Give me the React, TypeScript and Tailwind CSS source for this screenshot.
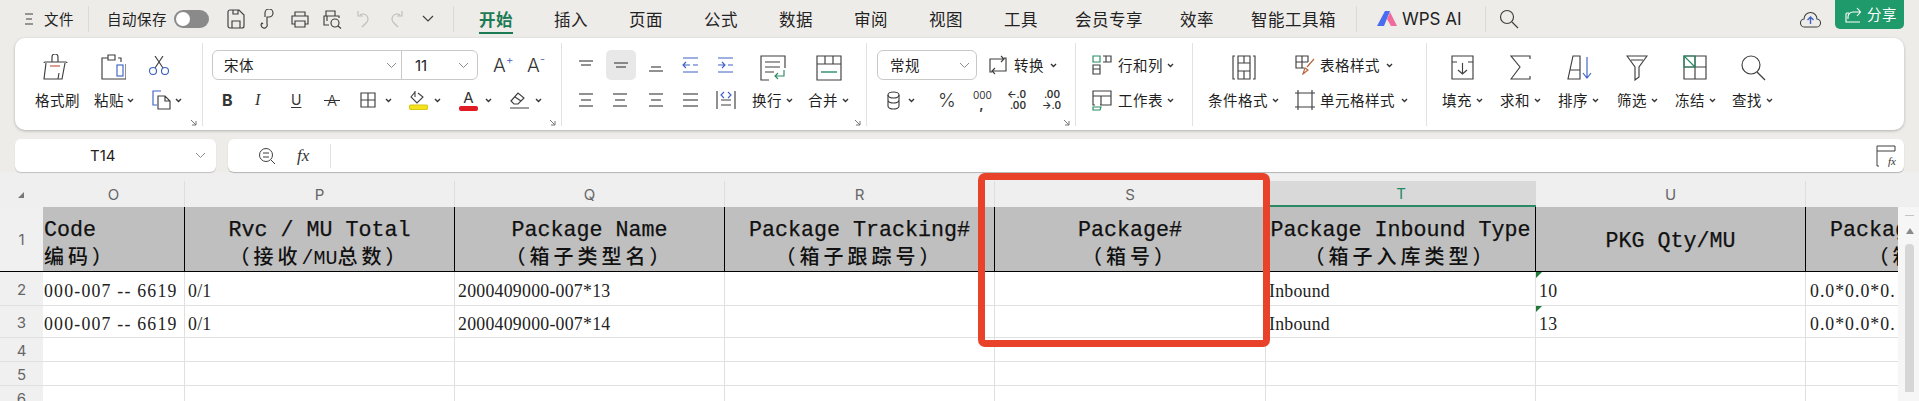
import React from "react";

const INK = "#3f3f3f";
const BLUE = "#3f62c4";
const GREEN = "#2b8a66";

function I({ w, h, className = "", children, sw = 1.15 }: { w: number; h: number; className?: string; children?: React.ReactNode; sw?: number }) {
  return (
    <svg width={w} height={h} viewBox={`0 0 ${w} ${h}`} fill="none" stroke={INK} strokeWidth={sw} className={`block shrink-0 ${className}`}>
      {children}
    </svg>
  );
}

const Chev = ({ className = "" }: { className?: string }) => (
  <svg width="7" height="5" viewBox="0 0 7 5" fill="none" stroke="#333" strokeWidth="1.4" className={`block shrink-0 ${className}`}>
    <path d="M1 1 L3.5 3.5 L6 1" />
  </svg>
);

const ThinChev = ({ className = "" }: { className?: string }) => (
  <svg width="11" height="7" viewBox="0 0 11 7" fill="none" stroke="#8d8d8d" strokeWidth="1" className={`block shrink-0 ${className}`}>
    <path d="M1 1 L5.5 5.5 L10 1" />
  </svg>
);

const Corner = () => (
  <svg width="7" height="7" viewBox="0 0 7 7" fill="none" stroke="#777" strokeWidth="1" className="absolute right-[5px] bottom-0 block">
    <path d="M1 1 L6 6 M6 2 V6 H2" />
  </svg>
);

const Label = ({ children, className = "" }: { children: React.ReactNode; className?: string }) => (
  <span className={`text-[14.5px] tracking-[0.5px] leading-none whitespace-nowrap text-[#1f1f1f] ${className}`}>{children}</span>
);

const Tab = ({ children }: { children: React.ReactNode }) => (
  <span className="text-[16.5px] tracking-[0.5px] leading-none whitespace-nowrap text-[#222]">{children}</span>
);

const Lines = ({ w = 16, ws, blue = false }: { w?: number; ws: number[][]; blue?: boolean }) => (
  <I w={w} h={16}>
    {ws.map((l, i) => (
      <path key={i} d={`M${l[1]} ${l[0]} H${l[2]}`} stroke={blue ? BLUE : INK} />
    ))}
  </I>
);

function TitleBar() {
  return (
    <div className="h-[38px] flex items-center pl-[24px] pr-[15px]">
      <I w={10} h={14}><path d="M1 2 H9 M2 7 H8 M1 12 H9" /></I>
      <span className="ml-[10px] text-[14.5px] tracking-[0.5px] leading-none text-[#222] whitespace-nowrap">文件</span>
      <div className="ml-[14px] w-px h-[26px] bg-[#dcdad6]" />
      <span className="ml-[18px] text-[14.5px] tracking-[0.5px] leading-none text-[#222] whitespace-nowrap">自动保存</span>
      <div className="ml-[7px] w-[35px] h-[18px] rounded-full bg-[#8a8a8a] flex items-center pl-[2px]">
        <div className="w-[14px] h-[14px] rounded-full bg-white" />
      </div>
      <I w={18} h={20} className="ml-[18px]"><path d="M1 3 a2 2 0 0 1 2-2 H12 L17 6 V17 a2 2 0 0 1 -2 2 H3 a2 2 0 0 1 -2-2 Z M5 19 V12 H13 V19 M6 1 V5 H11 V1" /></I>
      <I w={16} h={20} className="ml-[15px]"><path d="M5 8 V4 a4 4 0 0 1 8 0 a4 4 0 0 1 -4 4 H7 V15 a3 3 0 1 1 -5 -1 l1 1" /></I>
      <I w={18} h={18} className="ml-[15px]"><path d="M4 6 V2 H14 V6 M4 14 H1 V6 H17 V14 H14 M4 11 H14 V17 H4 Z" /></I>
      <I w={19} h={20} className="ml-[14px]"><path d="M3 7 V2 H12 V7 M6 16 H1 V7 H16 V9 M4 12 V7" /><circle cx="12" cy="14" r="4" /><path d="M15 17 L18 19.5" /></I>
      <I w={13} h={18} className="ml-[15px]"><path d="M3 5 a5 5 0 1 1 6 8 L5 17 M1 1 V6 H6" stroke="#bdbdbd" /></I>
      <I w={13} h={18} className="ml-[20px]"><path d="M10 5 a5 5 0 1 0 -6 8 L8 17 M12 1 V6 H7" stroke="#bdbdbd" /></I>
      <I w={12} h={8} className="ml-[19px]"><path d="M1 1 L6 6 L11 1" /></I>
      <div className="ml-[19px] w-px h-[26px] bg-[#dcdad6]" />
      <span className="relative ml-[25px] text-[16.5px] tracking-[0.5px] font-bold leading-none text-[#1c7a54] whitespace-nowrap">
        开始
        <span className="absolute left-0 right-0 top-[21px] h-[2px] bg-[#1c7a54]" />
      </span>
      <div className="ml-[41px] flex items-center gap-[41px]">
        <Tab>插入</Tab><Tab>页面</Tab><Tab>公式</Tab><Tab>数据</Tab><Tab>审阅</Tab><Tab>视图</Tab><Tab>工具</Tab>
      </div>
      <div className="ml-[37px] flex items-center gap-[37px]">
        <Tab>会员专享</Tab><Tab>效率</Tab><Tab>智能工具箱</Tab>
      </div>
      <div className="ml-[20px] w-px h-[26px] bg-[#dcdad6]" />
      <svg width="20" height="16" viewBox="0 0 20 16" className="ml-[20px] block shrink-0">
        <path d="M0 15 L8 0 H13 L7 15 Z" fill="#4a6cf0" />
        <path d="M10 8 L13 1 L20 15 H14 Z" fill="#f06a9c" />
      </svg>
      <span className="ml-[5px] w-[58px] text-[17px] leading-none text-[#222] whitespace-nowrap [font-family:Inter,sans-serif]">WPS AI</span>
      <div className="ml-[25px] w-px h-[26px] bg-[#dcdad6]" />
      <I w={20} h={20} className="ml-[13px]"><circle cx="8" cy="8" r="6.5" /><path d="M13 13 L19 19" /></I>
      <svg width="21" height="19" viewBox="0 0 21 19" fill="none" className="ml-auto block shrink-0">
        <path d="M5 17 a4 4 0 0 1 -1 -8 a6.5 6.5 0 0 1 13 0 a4 4 0 0 1 -1 8 Z" stroke={INK} strokeWidth="1.1" />
        <path d="M10.5 14 V7 M7.5 10 L10.5 7 L13.5 10" stroke={BLUE} strokeWidth="1.4" />
      </svg>
      <div className="ml-[14px] w-[69px] h-[29px] self-start rounded-b-[5px] bg-[#1f9a6b] flex items-center pl-[9px] gap-[5px]">
        <svg width="18" height="18" viewBox="0 0 18 18" fill="none" stroke="#fff" strokeWidth="1.1" className="block shrink-0">
          <path d="M5 7 H3 a1 1 0 0 0 -1 1 V16 H16 M4 13 V11 a5 5 0 0 1 5 -5 H16 M13 2 L16.5 6 L13 10" />
        </svg>
        <span className="text-[14.5px] tracking-[0.5px] leading-none text-white whitespace-nowrap">分享</span>
      </div>
    </div>
  );
}

const Row1 = ({ children }: { children: React.ReactNode }) => <div className="h-[30px] flex items-center">{children}</div>;
const Row2 = ({ children }: { children: React.ReactNode }) => <div className="h-[30px] mt-[5px] flex items-center">{children}</div>;

function Ribbon() {
  return (
    <div className="mx-[15px] w-[1889px] h-[92px] bg-white rounded-[10px] shadow-[0_1px_3px_rgba(0,0,0,0.25)] flex pt-[5px]">
      {/* clipboard */}
      <div className="relative w-[188px] h-[83px] border-r border-[#e2e2e2] pt-[7px]">
        <Row1>
          <I w={25} h={26} className="ml-[28px] mt-[3px]">
            <path d="M9 8 V3 a3 3 0 0 1 6 0 V8 M1 9 a1 1 0 0 1 1 -1 H23 a1 1 0 0 1 1 1 M3 9 L1 25 H19 L22 9 M16 19 L15 25" />
            <path d="M7 12 H17" stroke="#c4543e" />
          </I>
          <I w={25} h={26} className="ml-[33px] mt-[3px]">
            <path d="M7 4 H1 V25 H14 M7 6 V1 H14 V6 Z M17 4 H20 V8 M14 25 H25 V10" />
            <rect x="16" y="11" width="6" height="11" stroke={BLUE} />
          </I>
          <I w={20} h={19} className="ml-[23px]">
            <path d="M6 12 L14 0 M14 12 L6 0" />
            <circle cx="4" cy="15" r="3.5" stroke={BLUE} />
            <circle cx="16" cy="15" r="3.5" stroke={BLUE} />
          </I>
        </Row1>
        <Row2>
          <Label className="ml-[20px]">格式刷</Label>
          <Label className="ml-[14px]">粘贴</Label>
          <Chev className="ml-[3px]" />
          <I w={19} h={20} className="ml-[18px]">
            <path d="M9 1 H1 V15 H5 M1 1 H9" stroke={BLUE} />
            <path d="M6 6 H13 L18 11 V19 H6 Z M13 6 V11 H18" />
          </I>
          <Chev className="ml-[4px]" />
        </Row2>
        <Corner />
      </div>

      {/* font */}
      <div className="relative w-[359px] h-[83px] border-r border-[#e2e2e2] pt-[7px]">
        <Row1>
          <div className="ml-[9px] w-[266px] h-[30px] border border-[#c9c9c9] rounded-[6px] flex items-center">
            <div className="w-[189px] h-full border-r border-[#c9c9c9] flex items-center pl-[11px] pr-[4px]">
              <Label>宋体</Label>
              <ThinChev className="ml-auto" />
            </div>
            <span className="ml-[13px] text-[15px] leading-none text-[#222] [font-family:Inter,sans-serif]">11</span>
            <ThinChev className="ml-auto mr-[8px]" />
          </div>
          <span className="ml-[15px] w-[18px] flex items-start text-[19px] font-light leading-none text-[#333] [font-family:Inter,sans-serif]">A<span className="text-[12px] leading-none -mt-[2px] text-[#3f62c4]">+</span></span>
          <span className="ml-[16px] w-[18px] flex items-start text-[19px] font-light leading-none text-[#333] [font-family:Inter,sans-serif]">A<span className="text-[12px] leading-none -mt-[3px] text-[#3f62c4]">-</span></span>
        </Row1>
        <Row2>
          <span className="ml-[19px] w-[11px] text-[16px] font-bold leading-none text-[#333] [font-family:Inter,sans-serif]">B</span>
          <span className="ml-[22px] w-[12px] text-[16px] italic leading-none text-[#333] [font-family:'Liberation_Serif',serif]">I</span>
          <span className="ml-[24px] w-[12px] text-[14px] leading-none text-[#333] underline underline-offset-2 [font-family:Inter,sans-serif]">U</span>
          <span className="relative ml-[21px] w-[16px] text-center text-[15px] font-light leading-none text-[#333] [font-family:Inter,sans-serif]">
            A
            <span className="absolute left-0 right-0 top-[7px] h-px bg-[#333]" />
          </span>
          <I w={16} h={16} className="ml-[20px]"><path d="M1 1 H15 V15 H1 Z M8 1 V15 M1 8 H15" /></I>
          <Chev className="ml-[9px]" />
          <svg width="19" height="20" viewBox="0 0 19 20" fill="none" stroke={INK} strokeWidth="1.1" className="ml-[17px] block shrink-0">
            <path d="M6 2 L2 7 L8 13 L14 7 L9 3 M6 1 V7" />
            <rect x="0.5" y="15" width="18" height="4.5" rx="1.5" fill="#f3e21c" stroke="#d9c814" />
          </svg>
          <Chev className="ml-[6px]" />
          <div className="ml-[18px] w-[19px] flex flex-col items-center">
            <span className="text-[15px] leading-[15px] text-[#333] [font-family:Inter,sans-serif]">A</span>
            <div className="mt-[1px] w-[19px] h-[5px] rounded-[2px] bg-[#e01b24]" />
          </div>
          <Chev className="ml-[7px]" />
          <I w={21} h={18} className="ml-[17px]"><path d="M2 10 L9 2 L15 7 L9 13 H5 Z M6 6 L12 10 M1 17 H20" /></I>
          <Chev className="ml-[5px]" />
        </Row2>
        <Corner />
      </div>

      {/* alignment */}
      <div className="relative w-[305px] h-[83px] border-r border-[#e2e2e2] pt-[7px]">
        <Row1>
          <div className="ml-[16px] w-[16px]"><Lines ws={[[4, 1, 15], [8, 3, 13]]} /></div>
          <div className="ml-[12px] w-[30px] h-[30px] rounded-[5px] bg-[#e8e8e8] flex items-center justify-center"><Lines ws={[[6, 1, 15], [10, 3, 13]]} /></div>
          <div className="ml-[12px] w-[16px]"><Lines ws={[[10, 3, 13], [14, 1, 15]]} /></div>
          <I w={17} h={16} className="ml-[18px]"><path d="M1 1 H16 M1 15 H16 M11 8 H16 M1 8 H8 M4 5 L1 8 L4 11" stroke={BLUE} /></I>
          <I w={17} h={16} className="ml-[18px]"><path d="M1 1 H16 M1 15 H16 M1 8 H8 M11 8 H16 M5 5 L8 8 L5 11" stroke={BLUE} /></I>
          <I w={26} h={26} className="ml-[26px] mt-[5px]">
            <path d="M25 13 V1 H1 V25 H9 M5 7 H20 M5 12 H20 M5 17 H14" />
            <path d="M24 15 V21 H15 M18 18 L15 21 L18 24" stroke={GREEN} />
          </I>
          <I w={26} h={26} className="ml-[30px] mt-[5px]">
            <path d="M1 1 H25 V25 H1 Z M1 9 H25 M9 1 V9 M17 1 V9" />
            <path d="M5 17 H21" stroke={GREEN} strokeWidth="1.4" />
          </I>
        </Row1>
        <Row2>
          <div className="ml-[16px]"><Lines ws={[[2, 1, 15], [8, 3, 13], [14, 1, 15]]} /></div>
          <div className="ml-[18px]"><Lines ws={[[2, 1, 15], [8, 3, 13], [14, 1, 15]]} /></div>
          <div className="ml-[20px]"><Lines ws={[[2, 1, 15], [8, 3, 13], [14, 1, 15]]} /></div>
          <div className="ml-[18px]"><Lines ws={[[2, 1, 16], [8, 1, 16], [14, 1, 16]]} w={17} /></div>
          <I w={20} h={20} className="ml-[17px]">
            <path d="M1 1 V19 M19 1 V19 M5 10 H15 M5 15 H15" />
            <path d="M8 2 L5 5 L8 8 M12 2 L15 5 L12 8" stroke={BLUE} />
          </I>
          <Label className="ml-[16px]">换行</Label>
          <Chev className="ml-[4px]" />
          <Label className="ml-[15px]">合并</Label>
          <Chev className="ml-[4px]" />
        </Row2>
        <Corner />
      </div>

      {/* number */}
      <div className="relative w-[209px] h-[83px] border-r border-[#e2e2e2] pt-[7px]">
        <Row1>
          <div className="ml-[10px] w-[100px] h-[30px] border border-[#c9c9c9] rounded-[6px] flex items-center pl-[12px] pr-[6px]">
            <Label>常规</Label>
            <ThinChev className="ml-auto" />
          </div>
          <I w={18} h={20} className="ml-[12px]">
            <path d="M3 17 H1 V4 H15 M12 1 L15 4 L12 7 M15 3 H17 V16 H3 M6 13 L3 16 L6 19" />
          </I>
          <Label className="ml-[7px]">转换</Label>
          <Chev className="ml-[6px]" />
        </Row1>
        <Row2>
          <I w={13} h={19} className="ml-[20px]">
            <ellipse cx="6.5" cy="4" rx="5.5" ry="3" />
            <path d="M1 4 V15 a5.5 3 0 0 0 11 0 V4 M1 9 a5.5 3 0 0 0 11 0" />
          </I>
          <Chev className="ml-[8px]" />
          <span className="ml-[23px] w-[16px] text-[19px] font-light leading-none text-[#333] [font-family:Inter,sans-serif]">%</span>
          <span className="ml-[19px] w-[17px] text-center text-[10px] leading-[9px] text-[#333] [font-family:Inter,sans-serif]">000<br /><span className="text-[13px] font-bold">,</span></span>
          <span className="ml-[17px] w-[19px] text-right text-[10px] leading-[11px] font-semibold text-[#333] whitespace-nowrap [font-family:Inter,sans-serif]">←.0<br />.00</span>
          <span className="ml-[16px] w-[18px] text-right text-[10px] leading-[11px] font-semibold text-[#333] whitespace-nowrap [font-family:Inter,sans-serif]">.00<br />→.0</span>
        </Row2>
        <Corner />
      </div>

      {/* rows and cols */}
      <div className="w-[117px] h-[83px] border-r border-[#e2e2e2] pt-[7px]">
        <Row1>
          <I w={20} h={20} className="ml-[16px]">
            <path d="M1 1 H8 V7 H1 Z" stroke={GREEN} />
            <path d="M11 1 H19 V7 H11 M14 1 V7 M1 10 H8 V19 H1 Z M1 14 H8" />
          </I>
          <Label className="ml-[6px]">行和列</Label>
          <Chev className="ml-[4px]" />
        </Row1>
        <Row2>
          <I w={20} h={21} className="ml-[16px]">
            <path d="M3 15 H1 V1 H19 V15 H8 M1 6 H19 M9 6 V15" />
            <path d="M1 17 H9 L8 20 H1 Z" stroke={GREEN} />
          </I>
          <Label className="ml-[6px]">工作表</Label>
          <Chev className="ml-[4px]" />
        </Row2>
      </div>

      {/* styles */}
      <div className="w-[234px] h-[83px] border-r border-[#e2e2e2] pt-[7px]">
        <Row1>
          <I w={24} h={25} className="ml-[39px] mt-[5px]">
            <path d="M3 1 H1 V24 H3 M21 1 H23 V24 H21 M6 1 H18 V24 H6 Z M6 8 H18 M6 16 H18 M12 1 V8 M12 16 V24" />
          </I>
          <I w={20} h={20} className="ml-[39px]">
            <path d="M9 13 H1 V1 H13 V7 M1 7 H13 M7 1 V13" />
            <path d="M8 19 L10 13 L13 15 Z M12 12 L19 4" stroke="#b5643c" />
          </I>
          <Label className="ml-[5px]">表格样式</Label>
          <Chev className="ml-[6px]" />
        </Row1>
        <Row2>
          <Label className="ml-[15px]">条件格式</Label>
          <Chev className="ml-[4px]" />
          <I w={20} h={20} className="ml-[16px]"><path d="M3 0 V20 M17 0 V20 M0 3 H20 M0 17 H20" /></I>
          <Label className="ml-[5px]">单元格样式</Label>
          <Chev className="ml-[6px]" />
        </Row2>
      </div>

      {/* edit */}
      <div className="flex-1 h-[83px] pt-[7px]">
        <Row1>
          <I w={23} h={25} className="ml-[24px] mt-[5px]">
            <path d="M1 1 H22 V24 H1 Z M1 7 H6 M17 7 H22 M11.5 8 V19 M7 15 L11.5 19 L16 15" />
          </I>
          <I w={21} h={25} className="ml-[36px] mt-[5px]">
            <path d="M20 4 V1 H1 L10 12 L1 24 H20 V21" />
          </I>
          <I w={25} h={25} className="ml-[36px] mt-[5px]">
            <path d="M6 1 H13 V24 H1 Z M3 15 H13" />
            <path d="M20 2 V22 M16 18 L20 23 L24 18" stroke={BLUE} />
          </I>
          <I w={22} h={26} className="ml-[34px] mt-[5px]">
            <path d="M1 1 H21 L13 12 V22 L9 25 V12 Z M5 5 H17" />
          </I>
          <I w={24} h={25} className="ml-[35px] mt-[5px]">
            <path d="M1 1 H23 V24 H1 Z M12 1 V24 M1 12 H23" />
            <path d="M1 1 H12 V12 H1 Z M1 1 L12 12" stroke={GREEN} />
          </I>
          <I w={25} h={26} className="ml-[34px] mt-[5px]"><circle cx="10" cy="10" r="9" /><path d="M16 17 L24 25" /></I>
        </Row1>
        <Row2>
          <Label className="ml-[15px]">填充</Label>
          <Chev className="ml-[4px]" />
          <Label className="ml-[17px]">求和</Label>
          <Chev className="ml-[4px]" />
          <Label className="ml-[17px]">排序</Label>
          <Chev className="ml-[4px]" />
          <Label className="ml-[18px]">筛选</Label>
          <Chev className="ml-[4px]" />
          <Label className="ml-[17px]">冻结</Label>
          <Chev className="ml-[4px]" />
          <Label className="ml-[16px]">查找</Label>
          <Chev className="ml-[4px]" />
        </Row2>
      </div>
    </div>
  );
}

function FormulaBar() {
  return (
    <div className="mt-[9px] h-[33px] px-[15px] flex gap-[12px]">
      <div className="w-[201px] h-full bg-white rounded-[6px] shadow-[0_1px_1px_rgba(0,0,0,0.2)] flex items-center">
        <span className="ml-[75px] text-[15px] leading-none text-[#222] [font-family:Inter,sans-serif]">T14</span>
        <ThinChev className="ml-auto mr-[10px]" />
      </div>
      <div className="flex-1 h-full bg-white rounded-[6px] shadow-[0_1px_1px_rgba(0,0,0,0.25)] flex items-center">
        <I w={18} h={18} className="ml-[30px]" sw={1}>
          <circle cx="8" cy="8" r="6.5" />
          <path d="M13 13 L17 17 M5 6 H11 M5 10 H11" />
        </I>
        <span className="ml-[21px] w-[18px] text-[17px] italic leading-none text-[#333] [font-family:'Liberation_Serif',serif]">fx</span>
        <div className="ml-[15px] w-px h-[24px] bg-[#e2e2e2]" />
        <div className="ml-auto mr-[8px] relative w-[20px] h-[22px]">
          <I w={20} h={22} sw={1}><path d="M1 21 V1 H19 V6 M1 6 H19 M1 21 H3" /></I>
          <span className="absolute right-0 bottom-0 text-[11px] italic leading-none text-[#333] [font-family:'Liberation_Serif',serif]">fx</span>
        </div>
      </div>
    </div>
  );
}

const COLS = "grid grid-cols-[43px_142px_270px_270px_270px_271px_270px_270px_270px]";
const MONO = "[font-family:'Liberation_Mono','Noto_Sans_CJK_SC',monospace]";
const SERIF = "[font-family:'Liberation_Serif',serif]";

const headers: [string, string | null][] = [
  ["Code", "编码）"],
  ["Rvc / MU Total", "（接收/MU总数）"],
  ["Package Name", "（箱子类型名）"],
  ["Package Tracking#", "（箱子跟踪号）"],
  ["Package#", "（箱号）"],
  ["Package Inbound Type", "（箱子入库类型）"],
  ["PKG Qty/MU", null],
  ["Package Dimension", "（箱子尺寸）"],
];

const data = [
  ["000-007 -- 6619", "0/1", "2000409000-007*13", "", "", "Inbound", "10", "0.0*0.0*0."],
  ["000-007 -- 6619", "0/1", "2000409000-007*14", "", "", "Inbound", "13", "0.0*0.0*0."],
];

function ColumnHeads() {
  const letters = ["O", "P", "Q", "R", "S", "T", "U", ""];
  return (
    <div className={`${COLS} h-[35px] bg-[#efefef]`}>
      <div className="pt-[20px] pl-[18px]">
        <svg width="6" height="6" viewBox="0 0 6 6" className="block"><path d="M6 0 V6 H0 Z" fill="#777" /></svg>
      </div>
      {letters.map((l, i) => (
        <div
          key={i}
          className={
            l === "T"
              ? "mt-[9px] h-[26px] bg-[#d9d9d9] border-b-2 border-[#2b8a66] flex items-center justify-center text-[15px] leading-none text-[#1f8a65] [font-family:Inter,sans-serif]"
              : "mt-[9px] h-[26px] border-r border-[#dedede] flex items-center justify-center text-[15px] leading-none text-[#666] [font-family:Inter,sans-serif]"
          }
        >
          {l}
        </div>
      ))}
    </div>
  );
}

function HeaderRow() {
  return (
    <div className={`${COLS} h-[65px] border-b border-black`}>
      <div className="bg-[#f0f0f0] flex items-center justify-center text-[15px] leading-none text-[#666] [font-family:Inter,sans-serif]">1</div>
      {headers.map(([a, b], i) => (
        <div
          key={i}
          className={`bg-[#bfbfbf] border-r border-black overflow-hidden flex flex-col whitespace-nowrap text-[#111] ${b ? "justify-start pt-[10px]" : "justify-center pt-[5px]"} ${MONO} ${i === 0 ? "items-start pl-[1px]" : "items-center"}`}
        >
          <span className="text-[21.67px] leading-[27px] [-webkit-text-stroke:0.25px_#111]">{a}</span>
          {b && (
            <span className="text-[20px] tracking-[4px] leading-[30px] font-medium">
              {b.split(/(\/MU)/).map((p, k) =>
                p === "/MU" ? (
                  <span key={k} className="tracking-[0px]">{p}</span>
                ) : (
                  <span key={k}>{p}</span>
                )
              )}
            </span>
          )}
        </div>
      ))}
    </div>
  );
}

function DataRow({ n, cells, h }: { n: number; cells: string[]; h: string }) {
  return (
    <div className={`${COLS} ${h} border-b border-[#e0e0e0] bg-white`}>
      <div className="bg-[#f0f0f0] flex items-center justify-center pt-[2px] text-[15px] leading-none text-[#666] [font-family:Inter,sans-serif]">{n}</div>
      {cells.map((c, i) => (
        <div
          key={i}
          className={`relative border-r border-[#e0e0e0] overflow-hidden flex items-center pt-[7px] whitespace-nowrap text-[17.8px] leading-none text-[#222] ${SERIF} ${
            i === 0 ? "pl-[1px] tracking-[1.2px]" : i === 7 ? "pl-[4px] tracking-[1px]" : "pl-[3px] tracking-[0.25px]"
          }`}
        >
          {c}
          {i === 6 && c && <span className="absolute left-0 top-0 w-0 h-0 border-t-[6px] border-r-[6px] border-t-[#1f7a3a] border-r-transparent" />}
        </div>
      ))}
    </div>
  );
}

const blank = ["", "", "", "", "", "", "", ""];

function Sheet() {
  return (
    <div>
      <ColumnHeads />
      <div className="flex">
        <div className="w-[1898px] overflow-hidden">
          <HeaderRow />
          <DataRow n={2} cells={data[0]} h="h-[34px]" />
          <DataRow n={3} cells={data[1]} h="h-[32px]" />
          <DataRow n={4} cells={blank} h="h-[24px]" />
          <DataRow n={5} cells={blank} h="h-[24px]" />
          <DataRow n={6} cells={blank} h="h-[24px]" />
        </div>
        <div className="w-[21px] bg-[#f6f6f6] flex flex-col items-center pl-[2px]">
          <div className="mt-[8px] w-[9px] h-[1px] bg-[#c4c4c4]" />
          <svg width="8" height="6" viewBox="0 0 8 6" className="mt-[12px] block"><path d="M4 0 L8 6 H0 Z" fill="#8a8a8a" /></svg>
          <div className="mt-[10px] w-[9px] h-[148px] rounded-t-[4px] bg-[#d6d6d6]" />
        </div>
      </div>
    </div>
  );
}

export default function App() {
  return (
    <div className="relative w-[1919px] h-[401px] overflow-hidden bg-[#eeece9] [font-family:'Noto_Sans_CJK_SC',sans-serif]">
      <TitleBar />
      <Ribbon />
      <FormulaBar />
      <Sheet />
      <div className="absolute left-[978px] top-[173px] w-[292px] h-[174px] border-[7px] border-[#e8432a] rounded-[7px]" />
    </div>
  );
}
